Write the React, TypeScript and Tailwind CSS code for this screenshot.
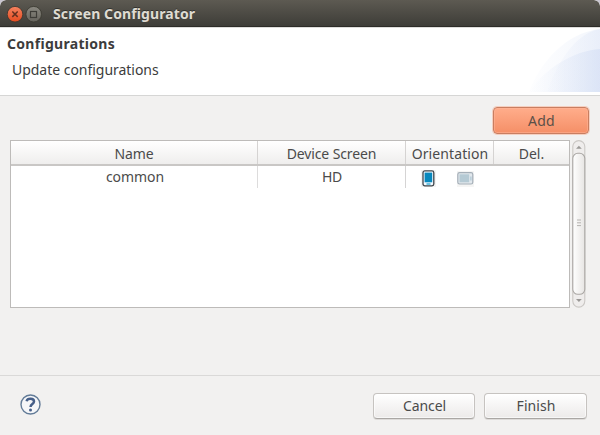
import React from 'react';

const columns = [
  { label: 'Name', width: 'w-[247px]', tracking: 'tracking-[-0.1px]' },
  { label: 'Device Screen', width: 'w-[148px]', tracking: 'tracking-[-0.12px]' },
  { label: 'Orientation', width: 'w-[88px]', tracking: 'pl-[1px] tracking-[0.1px]' },
  { label: 'Del.', width: 'w-[75px]', tracking: 'tracking-[0px]' },
];

function TitleBar() {
  return (
    <header className="flex h-[27px] shrink-0 items-center rounded-t-[6px] border-b border-[#2d2c28] bg-linear-to-b from-[#5d5a52] to-[#3e3d38] pl-[7px]">
      <svg width="36" height="18" viewBox="0 0 36 18" className="mt-[2px]">
        <defs>
          <linearGradient id="close" x1="0" y1="0" x2="0" y2="1">
            <stop offset="0" stopColor="#f58360" />
            <stop offset="1" stopColor="#e54b1f" />
          </linearGradient>
          <linearGradient id="max" x1="0" y1="0" x2="0" y2="1">
            <stop offset="0" stopColor="#8b8981" />
            <stop offset="1" stopColor="#65635c" />
          </linearGradient>
        </defs>
        <circle cx="8" cy="9.2" r="7.8" fill="url(#close)" stroke="#38352f" strokeWidth="0.8" />
        <path d="M5.3 6.5l5.4 5.4M10.7 6.5l-5.4 5.4" stroke="#65301f" strokeWidth="1.5" />
        <circle cx="26.7" cy="9.2" r="7.8" fill="url(#max)" stroke="#38372f" strokeWidth="0.8" />
        <rect x="23.5" y="6.5" width="6" height="6" fill="none" stroke="#3d3c37" strokeWidth="1.2" />
      </svg>
      <h1 className="ml-[10px] mt-[2px] whitespace-nowrap text-[14px] leading-[20px] font-bold tracking-[0.1px] text-[#dfdbd2] [text-shadow:0_-1px_0_#33322e]">
        Screen Configurator
      </h1>
    </header>
  );
}

function Banner() {
  return (
    <section className="flex h-[69px] shrink-0 justify-between border-t border-b border-t-[#dedddb] border-b-[#d6d6d5] bg-white">
      <div className="whitespace-nowrap text-[14px] leading-[20px] text-[#3c3c3c]">
        <h2 className="mt-[6px] ml-[7px] font-bold tracking-[0.3px]">Configurations</h2>
        <p className="mt-[6px] ml-[12px] tracking-[-0.03px]">Update configurations</p>
      </div>
      <svg width="75" height="64" viewBox="0 0 75 64">
        <defs>
          <linearGradient id="swoosh">
            <stop offset="0" stopColor="#e2e9f8" stopOpacity="0.15" />
            <stop offset="1" stopColor="#dbe4f6" />
          </linearGradient>
          <linearGradient id="swooshDeep">
            <stop offset="0" stopColor="#d9e3f6" stopOpacity="0" />
            <stop offset="1" stopColor="#cbd8f2" />
          </linearGradient>
        </defs>
        <path d="M4 64C15 35 40 5 75 1V64Z" fill="url(#swoosh)" opacity=".35" />
        <path d="M22 64C34 29 54 4 75 1V64Z" fill="url(#swoosh)" opacity=".4" />
        <path d="M4 64C20 41 47 23 75 21V64Z" fill="url(#swooshDeep)" opacity=".45" />
      </svg>
    </section>
  );
}

function Phone() {
  return (
    <svg width="15" height="17" viewBox="0 0 15 17">
      <rect width="15" height="17" fill="#f4f4f3" />
      <rect x="2" y="0.9" width="10.8" height="15" rx="1.8" fill="#f4faff" stroke="#3f464c" strokeWidth="1.3" />
      <rect x="3.6" y="2.6" width="7.6" height="9.7" fill="#0788bd" />
      <path d="M5.5 14h4" stroke="#0797ca" strokeWidth="1.1" />
    </svg>
  );
}

function Tablet() {
  return (
    <svg width="17" height="17" viewBox="0 0 17 17">
      <rect y="1" width="17" height="16" fill="#f5f5f4" />
      <rect x="0.8" y="2.6" width="15" height="11.4" rx="1.8" fill="#e2e8ed" stroke="#a5afb8" strokeWidth="1.2" />
      <rect x="2.5" y="4.3" width="9.7" height="8" fill="#b5cad4" />
      <path d="M13.9 6.5v4" stroke="#a8c3d0" strokeWidth="1.1" />
    </svg>
  );
}

function ConfigTable() {
  return (
    <div className="h-[168px] w-[560px] border border-[#bdbbb9] bg-white text-[14px] text-[#4b4b4b]">
      <div className="flex h-[25px] border-b-2 border-[#c9c7c5] bg-linear-to-b from-white to-[#efeeed]">
        {columns.map((c, i) => (
          <div
            key={c.label}
            className={`${c.width} ${c.tracking} shrink-0 text-center whitespace-nowrap leading-[25px] ${i < 3 ? 'border-r border-[#d5d3d2]' : ''}`}
          >
            {c.label}
          </div>
        ))}
      </div>
      <div className="flex h-[22px] leading-[22px]">
        <div className="w-[247px] border-r border-[#dddcdc] pl-[2px] text-center tracking-[-0.05px]">common</div>
        <div className="w-[148px] border-r border-[#d5d4d4] pl-[1px] text-center tracking-[-0.2px]">HD</div>
        <div className="flex gap-[21px] pt-[4px] pl-[15px]">
          <Phone />
          <Tablet />
        </div>
      </div>
    </div>
  );
}

function ScrollBar() {
  return (
    <svg width="14" height="168" viewBox="0 0 14 168" className="ml-[2px]">
      <defs>
        <linearGradient id="thumb">
          <stop offset="0" stopColor="#ffffff" />
          <stop offset="1" stopColor="#e7e5e3" />
        </linearGradient>
      </defs>
      <rect x="0.8" y="0.6" width="12" height="166.5" rx="6" fill="#efedec" stroke="#cbc8c5" strokeWidth="1.1" />
      <path d="M4 8.8L6.9 5.8 9.8 8.8Z" fill="#9a9896" />
      <path d="M4 159L6.9 162 9.8 159Z" fill="#9a9896" />
      <rect x="0.8" y="13.3" width="12" height="141" rx="5" fill="url(#thumb)" stroke="#aaa7a4" strokeWidth="1.1" />
      <path d="M5 80h4M5 82.8h4M5 85.6h4" stroke="#b5b3b0" strokeWidth="1" />
    </svg>
  );
}

function ActionButton({ label, className }: { label: string; className: string }) {
  return (
    <button
      className={`h-[26px] rounded-[4px] border border-[#c6c3c0] border-b-[#aaa7a4] bg-linear-to-b from-white to-[#eceae9] pl-[1px] text-center text-[14px] leading-[24px] text-[#4b4b4b] shadow-[0_1px_0_#dddbd9,inset_0_0_0_1px_#ffffff99] ${className}`}
    >
      {label}
    </button>
  );
}

export default function App() {
  return (
    <div className="bg-[#c9c5d0] font-['Noto_Sans','Open_Sans',sans-serif]">
      <main className="flex h-[435px] w-[600px] flex-col overflow-hidden rounded-t-[6px] bg-[#f2f1f0]">
        <TitleBar />
        <Banner />
        <section className="flex h-[279px] shrink-0 flex-col">
          <div className="flex h-[44px] justify-end pt-[11px] pr-[11px]">
            <button className="h-[27px] w-[96px] rounded-[4px] border border-[#c97e60] bg-linear-to-b from-[#ffad8b] to-[#f58f67] pt-[1px] pl-[1px] text-center text-[14px] leading-[24px] tracking-[0.3px] text-[#5b5048] shadow-[inset_0_0_0_1px_#ffb69980,0_0_0_1px_#f5cfc0]">
              Add
            </button>
          </div>
          <div className="flex pl-[10px]">
            <ConfigTable />
            <ScrollBar />
          </div>
        </section>
        <footer className="flex flex-1 items-start border-t border-[#dad9d8] pt-[17px] pl-[20px]">
          <svg width="21" height="21" viewBox="0 0 21 21" className="mt-[1px] mr-auto">
            <circle cx="10.5" cy="10.5" r="9.5" fill="#f5f6f8" stroke="#627b97" strokeWidth="1.4" />
            <path d="M6.6 7.2C7.4 3.9 14 3.9 14 7.6C14 10.2 10.7 10 10.5 13" fill="none" stroke="#465f89" strokeWidth="2.5" />
            <circle cx="10.5" cy="16" r="1.5" fill="#465f89" />
          </svg>
          <ActionButton label="Cancel" className="mr-[9px] w-[102px] tracking-[-0.1px]" />
          <ActionButton label="Finish" className="mr-[13px] w-[103px] tracking-[0.05px]" />
        </footer>
      </main>
    </div>
  );
}
